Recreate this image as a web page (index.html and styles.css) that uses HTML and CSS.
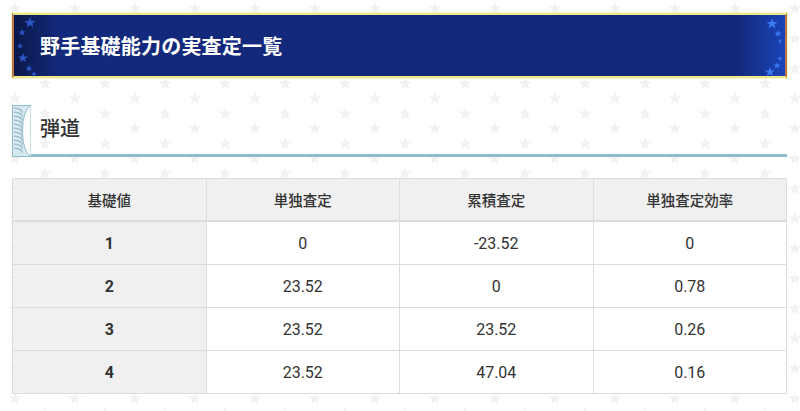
FILE: index.html
```html
<!DOCTYPE html>
<html lang="ja">
<head>
<meta charset="utf-8">
<link rel="stylesheet" href="styles.css">
</head>
<body>
<div class="page">
  <div class="banner">
    <svg class="stars-left" width="26" height="64" viewBox="0 0 26 64">
      <g fill="#2c55c8">
        <polygon points="16,2 17.5,6 21.5,6 18.3,8.5 19.5,12.5 16,10 12.5,12.5 13.7,8.5 10.5,6 14.5,6"/>
        <polygon points="8,14 9,16.5 11.5,16.5 9.5,18 10.3,20.5 8,19 5.7,20.5 6.5,18 4.5,16.5 7,16.5"/>
        <polygon points="6,28 6.8,30 9,30 7.2,31.3 7.9,33.5 6,32.2 4.1,33.5 4.8,31.3 3,30 5.2,30"/>
        <polygon points="9,38 10.3,41.5 14,41.5 11,43.7 12.2,47.2 9,45 5.8,47.2 7,43.7 4,41.5 7.7,41.5"/>
        <polygon points="15,50 16,52.5 18.5,52.5 16.5,54 17.3,56.5 15,55 12.7,56.5 13.5,54 11.5,52.5 14,52.5"/>
        <polygon points="20,56 20.8,58 23,58 21.2,59.3 21.9,61.5 20,60.2 18.1,61.5 18.8,59.3 17,58 19.2,58"/>
      </g>
    </svg>
    <h1 class="banner-title">野手基礎能力の実査定一覧</h1>
    <svg class="stars-right" width="22" height="64" viewBox="0 0 22 64">
      <g fill="#3a78f0">
        <polygon points="9,3 10.5,7 14.5,7 11.3,9.5 12.5,13.5 9,11 5.5,13.5 6.7,9.5 3.5,7 7.5,7"/>
        <polygon points="15,15 16,17.5 18.5,17.5 16.5,19 17.3,21.5 15,20 12.7,21.5 13.5,19 11.5,17.5 14,17.5"/>
        <polygon points="17,24 17.6,25.5 19.2,25.5 18,26.5 18.4,28 17,27.2 15.6,28 16,26.5 14.8,25.5 16.4,25.5"/>
        <polygon points="17,41 17.7,42.8 19.6,42.8 18.1,43.9 18.6,45.7 17,44.6 15.4,45.7 15.9,43.9 14.4,42.8 16.3,42.8"/>
        <polygon points="14,47 15,49.5 17.5,49.5 15.5,51 16.3,53.5 14,52 11.7,53.5 12.5,51 10.5,49.5 13,49.5"/>
        <polygon points="7,52 8.3,55.5 12,55.5 9,57.7 10.2,61.2 7,59 3.8,61.2 5,57.7 2,55.5 5.7,55.5"/>
      </g>
    </svg>
  </div>

  <h2 class="section-head">
    <svg class="ring" width="19" height="52" viewBox="0 0 19 52">
      <rect x="0.5" y="0.5" width="18" height="51" fill="#d6e9f0" stroke="#8fbccb"/>
      <g fill="none" stroke="#8fb5c4" stroke-width="1.1">
        <path d="M2 3 Q11 4 10 8"/><path d="M2 7 Q11 8 10 12"/><path d="M2 11 Q11 12 10 16"/>
        <path d="M2 15 Q11 16 10 20"/><path d="M2 19 Q11 20 10 24"/><path d="M2 23 Q11 24 10 28"/>
        <path d="M2 27 Q11 28 10 32"/><path d="M2 31 Q11 32 10 36"/><path d="M2 35 Q11 36 10 40"/>
        <path d="M2 39 Q11 40 10 44"/><path d="M2 43 Q11 44 10 48"/>
      </g>
      <path d="M19 0 Q10.5 6 10.5 26 Q10.5 46 19 52 Z" fill="#fff" stroke="#8fbccb"/>
    </svg>
    <span class="section-title">弾道</span>
  </h2>

  <table class="grid">
    <thead>
      <tr><th>基礎値</th><th>単独査定</th><th>累積査定</th><th>単独査定効率</th></tr>
    </thead>
    <tbody>
      <tr><th>1</th><td>0</td><td>-23.52</td><td>0</td></tr>
      <tr><th>2</th><td>23.52</td><td>0</td><td>0.78</td></tr>
      <tr><th>3</th><td>23.52</td><td>23.52</td><td>0.26</td></tr>
      <tr><th>4</th><td>23.52</td><td>47.04</td><td>0.16</td></tr>
    </tbody>
  </table>
</div>
</body>
</html>
```

FILE: styles.css
```css
html, body {
  margin: 0;
  padding: 0;
}
body {
  font-family: Roboto, "Noto Sans CJK JP", sans-serif;
  color: #333;
  background-color: #fff;
  background-image: url("data:image/svg+xml;utf8,<svg xmlns='http://www.w3.org/2000/svg' width='60' height='30' viewBox='0 0 60 30'><g fill='%23f2f2f2'><polygon points='15,2 16.8,6.6 21.7,6.6 17.7,9.6 19.2,14.4 15,11.5 10.8,14.4 12.3,9.6 8.3,6.6 13.2,6.6'/><polygon points='45,17 46.8,21.6 51.7,21.6 47.7,24.6 49.2,29.4 45,26.5 40.8,29.4 42.3,24.6 38.3,21.6 43.2,21.6'/></g></svg>");
  background-size: 60px 30px;
}
.page {
  padding: 13px 13px 0 12px;
}
.banner {
  position: relative;
  height: 61px;
  border-style: solid;
  border-width: 2px;
  border-color: #ece98a #b87a45 #ece98a #b87a45;
  background: linear-gradient(90deg, #0b1848 0%, #132a7c 6%, #132a7c 94%, #1b44b8 100%);
  display: flex;
  align-items: center;
  box-shadow: 0 0 0 1px #f7f5c8;
}
.banner-title {
  margin: 0 0 0 26px;
  font-family: "Noto Sans CJK JP", sans-serif;
  font-weight: 700;
  font-size: 20px;
  color: #fff;
  letter-spacing: 0.2px;
}
.stars-left {
  position: absolute;
  left: 0;
  top: 0;
}
.stars-right {
  position: absolute;
  right: 0;
  top: 0;
}
.section-head {
  margin: 27px 0 0 0;
  height: 49px;
  display: flex;
  align-items: center;
  border-bottom: 3px solid #8fbccb;
  font-weight: 500;
}
.ring {
  flex: none;
  align-self: flex-start;
  margin-right: 9px;
}
.section-title {
  font-family: "Noto Sans CJK JP", sans-serif;
  font-size: 20px;
  font-weight: 500;
  color: #333;
  margin-top: -4px;
}
.grid {
  margin-top: 21px;
  width: 100%;
  border-collapse: collapse;
  table-layout: fixed;
  font-size: 16px;
  background: #fff;
}
.grid th, .grid td {
  border: 1px solid #dcdcdc;
  height: 42px;
  padding: 0;
  text-align: center;
  vertical-align: middle;
}
.grid thead th {
  background: #f0f0f0;
  font-family: "Noto Sans CJK JP", sans-serif;
  font-size: 14.5px;
  font-weight: 500;
  height: 41px;
  border-bottom: 2px solid #dcdcdc;
}
.grid tbody th {
  background: #f0f0f0;
  font-weight: 700;
}
.grid td {
  font-weight: 400;
}
```
